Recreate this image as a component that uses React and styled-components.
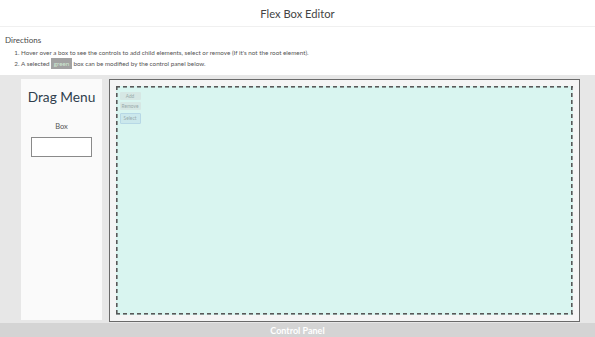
import React from "react";
import styled, { createGlobalStyle } from "styled-components";

const Global = createGlobalStyle`
  html, body { margin: 0; padding: 0; background: #fff; }
  body { font-family: Lato, "Open Sans", sans-serif; width: 595px; height: 337px; overflow: hidden; }
  #root { height: 337px; display: flex; flex-direction: column; }
`;

const Header = styled.header`
  height: 27px;
  flex: none;
  display: flex;
  align-items: center;
  justify-content: center;
  border-bottom: 1px solid #f0f0f0;
  box-sizing: border-box;
`;

const Title = styled.h1`
  margin: 0;
  font-size: 11.2px;
  font-weight: 400;
  color: #444;
`;

const Directions = styled.section`
  flex: none;
  height: 48px;
  padding: 8px 0 0 5px;
  box-sizing: border-box;
`;

const DirTitle = styled.div`
  font-size: 8px;
  color: #4a4a4a;
  line-height: 10px;
`;

const List = styled.ol`
  margin: 2px 0 0;
  padding: 0 0 0 16px;
  font-size: 6.3px;
  color: #555;
  li { line-height: 11px; padding-left: 0; }
`;

const Green = styled.span`
  background: #a2a2a2;
  color: #cfe9d2;
  padding: 2px 2.5px;
`;

const Main = styled.main`
  flex: 1;
  background: #e7e7e7;
  display: flex;
  gap: 7px;
  padding: 4px 15px 1px 21px;
  box-sizing: border-box;
  min-height: 0;
`;

const Sidebar = styled.aside`
  width: 81px;
  flex: none;
  background: #fafafa;
  margin-bottom: 2px;
  display: flex;
  flex-direction: column;
  align-items: center;
`;

const MenuTitle = styled.h2`
  margin: 8px 0 0;
  font-size: 13.7px;
  font-weight: 400;
  color: #2f3e4d;
  line-height: 20px;
`;

const ItemLabel = styled.div`
  margin-top: 15px;
  font-size: 7.5px;
  color: #555;
`;

const BoxItem = styled.div`
  margin-top: 6px;
  width: 61px;
  height: 20px;
  box-sizing: border-box;
  border: 1.5px solid #8a8a8a;
  background: #fff;
`;

const Canvas = styled.div`
  flex: 1;
  border: 1.5px solid #6a6a6a;
  background: #f5f5f5;
  padding: 5.5px 6px 6px 6px;
  display: flex;
`;

const dashH = "repeating-linear-gradient(90deg, #585858 0 4px, transparent 4px 7px)";
const dashV = "repeating-linear-gradient(180deg, #585858 0 4px, transparent 4px 7px)";

const Root = styled.div`
  flex: 1;
  background:
    ${dashH} left top / 100% 1.6px no-repeat,
    ${dashH} left bottom / 100% 1.6px no-repeat,
    ${dashV} left top / 1.6px 100% no-repeat,
    ${dashV} right top / 1.6px 100% no-repeat,
    #d9f5f0;
  display: flex;
  flex-direction: column;
  align-items: flex-start;
  gap: 2px;
  padding: 6px 0 0 3.5px;
`;

const Ctrl = styled.button`
  font-family: Lato, sans-serif;
  font-size: 4.8px;
  color: #9aa;
  width: 21px;
  height: ${(p) => (p.$active ? "11px" : "8px")};
  padding: 0;
  border: ${(p) => (p.$active ? "1px solid #b7d8e6" : "none")};
  background: ${(p) => (p.$active ? "#cbe8ec" : "#d6e7e4")};
  border-radius: 1px;
  margin-top: ${(p) => (p.$active ? "1px" : "0")};
`;

const ControlBar = styled.footer`
  flex: none;
  height: 14px;
  background: #d4d4d4;
  color: #fff;
  font-size: 9px;
  font-weight: 700;
  display: flex;
  align-items: center;
  justify-content: center;
`;

export default function App() {
  return (
    <>
      <Global />
      <Header>
        <Title>Flex Box Editor</Title>
      </Header>
      <Directions>
        <DirTitle>Directions</DirTitle>
        <List>
          <li>Hover over a box to see the controls to add child elements, select or remove (If it's not the root element).</li>
          <li>A selected <Green>green</Green> box can be modified by the control panel below.</li>
        </List>
      </Directions>
      <Main>
        <Sidebar>
          <MenuTitle>Drag Menu</MenuTitle>
          <ItemLabel>Box</ItemLabel>
          <BoxItem />
        </Sidebar>
        <Canvas>
          <Root>
            <Ctrl>Add</Ctrl>
            <Ctrl>Remove</Ctrl>
            <Ctrl $active>Select</Ctrl>
          </Root>
        </Canvas>
      </Main>
      <ControlBar>Control Panel</ControlBar>
    </>
  );
}
